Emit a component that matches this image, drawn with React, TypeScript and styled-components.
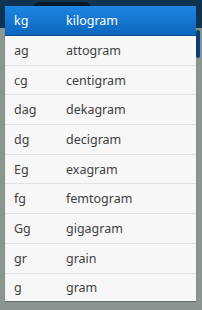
import React from "react";
import styled, { createGlobalStyle } from "styled-components";

const Global = createGlobalStyle`
  html, body {
    margin: 0;
    padding: 0;
    background: #8b968f;
  }
  body {
    font-family: "Noto Sans", "Open Sans", "DejaVu Sans", sans-serif;
  }
`;

const Screen = styled.div`
  position: relative;
  width: 202px;
  height: 310px;
  overflow: hidden;
  background: #8b968f;
`;

const TopBar = styled.div`
  height: 28px;
  background: #0e3452;
  display: flex;
  padding-left: 33px;
`;

const Tab = styled.div`
  width: 58px;
  height: 8px;
  border-radius: 6px 6px 0 0;
  margin-top: 2px;
  background: #06192a;
`;

const SideButton = styled.div`
  position: absolute;
  right: 2px;
  top: 30px;
  width: 4px;
  height: 28px;
  border-radius: 2px;
  background: #0a3f7a;
`;

const Dialog = styled.div`
  position: absolute;
  left: 5px;
  top: 6px;
  width: 191px;
  height: 295px;
  overflow: hidden;
  background: #f7f7f7;
  box-shadow: 0 1px 1px rgba(0, 0, 0, 0.25);
`;

const Header = styled.div`
  height: 29px;
  display: flex;
  align-items: center;
  background: linear-gradient(#1c86e0, #0d66bd);
  border-bottom: 1px solid #0a4f93;
  color: #ffffff;
`;

const Row = styled.div`
  height: 29.7px;
  box-sizing: border-box;
  display: flex;
  align-items: center;
  border-bottom: 1px solid #e2e2e2;
  color: #404040;
`;

const Code = styled.span`
  width: 52px;
  padding-left: 9px;
  font-size: 12.5px;
`;

const Name = styled.span`
  font-size: 12.5px;
`;

const units: [string, string][] = [
  ["ag", "attogram"],
  ["cg", "centigram"],
  ["dag", "dekagram"],
  ["dg", "decigram"],
  ["Eg", "exagram"],
  ["fg", "femtogram"],
  ["Gg", "gigagram"],
  ["gr", "grain"],
  ["g", "gram"],
];

export default function App() {
  return (
    <Screen>
      <Global />
      <TopBar>
        <Tab />
      </TopBar>
      <SideButton />
      <Dialog>
        <Header>
          <Code>kg</Code>
          <Name>kilogram</Name>
        </Header>
        {units.map(([c, n]) => (
          <Row key={c}>
            <Code>{c}</Code>
            <Name>{n}</Name>
          </Row>
        ))}
      </Dialog>
    </Screen>
  );
}
